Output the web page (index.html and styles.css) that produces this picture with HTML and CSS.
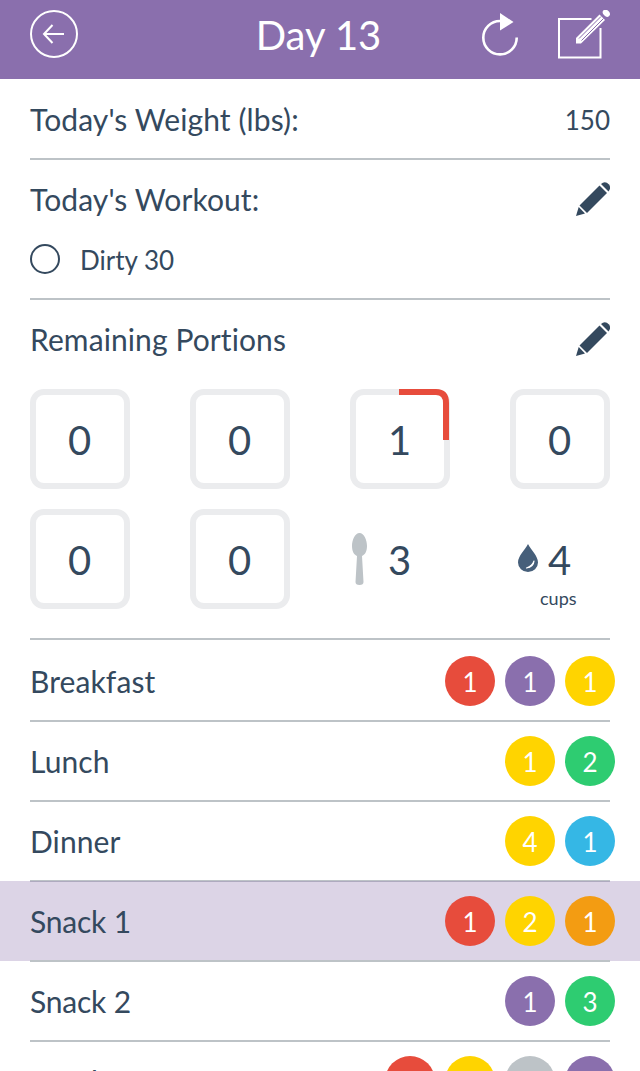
FILE: index.html
```html
<!DOCTYPE html>
<html lang="en">
<head>
<meta charset="utf-8">
<title>Day 13</title>
<link rel="stylesheet" href="styles.css">
</head>
<body>
<div class="app">
  <header class="topbar">
    <svg class="back" width="48" height="48" viewBox="0 0 48 48" fill="none" stroke="#fff" stroke-width="2"><circle cx="24" cy="24" r="23"/><path d="M34 24H14M22.500 15L14 24l8.500 9"/></svg>
    <h1 class="title">Day 13</h1>
    <div class="actions">
      <svg width="38" height="44" viewBox="0 0 38 44"><path d="M20 8A16.700 16.700 0 1 0 36.700 24.500" fill="none" stroke="#fff" stroke-width="2.600"/><path d="M20 0l13.500 9L20 17.500z" fill="#fff"/></svg>
      <svg width="54" height="50" viewBox="0 0 54 50"><path d="M35.500 9H3V47.500H44.500V18" fill="none" stroke="#fff" stroke-width="2"/><path d="M20 28L43.500 4.500 49 10 25 33.500H20z" fill="#fff"/><path d="M23 28.500L45 6.500M25.500 30.500L47.500 8.500" stroke="#8a6fad" stroke-width="1"/><ellipse cx="50.300" cy="3.200" rx="4" ry="3" transform="rotate(45 50.300 3.200)" fill="#fff"/></svg>
    </div>
  </header>

  <section class="section weight">
    <h2 class="label">Today's Weight (lbs):</h2>
    <span class="value">150</span>
  </section>

  <section class="section workout">
    <div class="heading">
      <h2 class="label">Today's Workout:</h2>
      <svg class="pencil" width="34" height="34" viewBox="0 0 34 34" fill="#34495e"><path d="M25 2Q29 -1.500 33 2.500Q35.500 6 32.500 9.500z"/><path d="M23.500 3.500L31 11 11 31 3.500 23.500z"/><path d="M2.700 25L9 31.500 0 34z"/></svg>
    </div>
    <div class="task"><span class="radio"></span><span class="value">Dirty 30</span></div>
  </section>

  <section class="section portions">
    <div class="heading">
      <h2 class="label">Remaining Portions</h2>
      <svg class="pencil" width="34" height="34" viewBox="0 0 34 34" fill="#34495e"><path d="M25 2Q29 -1.500 33 2.500Q35.500 6 32.500 9.500z"/><path d="M23.500 3.500L31 11 11 31 3.500 23.500z"/><path d="M2.700 25L9 31.500 0 34z"/></svg>
    </div>
    <div class="grid">
      <div class="tile">0</div>
      <div class="tile">0</div>
      <div class="tile">1<svg class="progress" width="100" height="100" viewBox="0 0 100 100"><path d="M49 3H86Q96 3 96 14V51" fill="none" stroke="#e74c3c" stroke-width="6"/></svg></div>
      <div class="tile">0</div>
      <div class="tile">0</div>
      <div class="tile">0</div>
      <div class="plain">3
        <svg class="spoon" width="16" height="52" viewBox="0 0 16 52" fill="#bdc3c7"><path d="M7.500 0C12 0 15 7 15 13c0 6-2.500 9-5 10l1.500 26Q11.500 52 7.500 52T3.500 49l1.500-26C2.500 22 0 19 0 13 0 7 3 0 7.500 0z"/></svg>
      </div>
      <div class="plain">4
        <svg class="drop" width="20" height="28" viewBox="0 0 20 28"><path d="M10 0C13 6 20 12 20 18.500A10 9.500 0 0 1 0 18.500C0 12 7 6 10 0z" fill="#465f7a"/><path d="M16 17Q15.500 23 8.500 24Q14.500 22 16 17z" fill="#fff" stroke="#fff" stroke-width="1.200" stroke-linejoin="round"/></svg>
        <span class="unit">cups</span>
      </div>
    </div>
  </section>

  <main class="meals">
    <div class="meal"><h2 class="label">Breakfast</h2><div class="badges"><span class="badge red">1</span><span class="badge purple">1</span><span class="badge yellow">1</span></div></div>
    <div class="meal"><h2 class="label">Lunch</h2><div class="badges"><span class="badge yellow">1</span><span class="badge green">2</span></div></div>
    <div class="meal"><h2 class="label">Dinner</h2><div class="badges"><span class="badge yellow">4</span><span class="badge blue">1</span></div></div>
    <div class="meal selected"><h2 class="label snack">Snack 1</h2><div class="badges"><span class="badge red">1</span><span class="badge yellow">2</span><span class="badge orange">1</span></div></div>
    <div class="meal"><h2 class="label snack">Snack 2</h2><div class="badges"><span class="badge purple">1</span><span class="badge green">3</span></div></div>
    <div class="meal"><h2 class="label snack">Snack 3</h2><div class="badges"><span class="badge red"></span><span class="badge yellow"></span><span class="badge gray"></span><span class="badge purple"></span></div></div>
  </main>
</div>
</body>
</html>
```

FILE: styles.css
```css
* { box-sizing: border-box; }
body { margin: 0; background: #fff; color: #34495e; font-family: Lato, sans-serif; font-variant-ligatures: none; }
svg { display: block; flex: none; }
.app { width: 640px; height: 1071px; overflow: hidden; }
.topbar { height: 79px; padding: 10px 30px 0; background: #8a6fad; color: #fff; display: grid; grid-template-columns: 1fr auto 1fr; align-items: start; }
.title { margin: 0; font-size: 40px; font-weight: 400; line-height: 51px; padding-right: 3px; }
.actions { display: flex; justify-content: flex-end; gap: 38px; }
.actions svg:first-child { margin-top: 3px; }
.label { margin: 0; font-size: 30px; font-weight: 400; line-height: 38px; letter-spacing: 0.1px; }
.snack { letter-spacing: -0.2px; }
.value { font-size: 26px; line-height: 40px; }
.section { margin: 0 30px; border-bottom: 2px solid #bdc3c7; }
.weight { height: 81px; display: flex; justify-content: space-between; padding-top: 21px; }
.workout { height: 140px; padding-top: 20px; }
.heading { display: flex; justify-content: space-between; height: 40px; }
.pencil { margin-top: 2px; }
.task { display: flex; align-items: center; gap: 20px; margin-top: 19px; }
.task .value { padding-top: 2px; line-height: 38px; }
.radio { width: 30px; height: 30px; border: 2px solid #34495e; border-radius: 50%; }
.portions { height: 340px; padding-top: 20px; }
.grid { display: grid; grid-template-columns: repeat(4, 100px); grid-auto-rows: 100px; gap: 20px 60px; margin-top: 29px; }
.tile, .plain { position: relative; font-size: 40px; line-height: 100px; text-align: center; }
.tile { border: 6px solid #ebecee; border-radius: 14px; line-height: 90px; padding-right: 1px; }
.plain { line-height: 102px; padding-right: 1px; }
.progress { position: absolute; left: -6px; top: -6px; }
.spoon { position: absolute; left: 2px; top: 24px; }
.drop { position: absolute; left: 8px; top: 35px; }
.unit { position: absolute; left: 30px; top: 78px; font-size: 18px; line-height: 22px; }
.meals { padding-top: 1px; }
.meal { position: relative; height: 80px; padding: 0 25px 0 30px; display: flex; align-items: center; justify-content: space-between; }
.meal::after { content: ""; position: absolute; left: 30px; right: 30px; bottom: -1px; height: 2px; background: #bdc3c7; }
.selected { background: rgba(138, 111, 173, 0.3); }
.badges { display: flex; gap: 10px; }
.badge { width: 50px; height: 50px; border-radius: 50%; color: #fff; font-size: 26px; line-height: 52px; text-align: center; }
.red { background: #e74c3c; }
.purple { background: #8a6fad; }
.yellow { background: #ffd400; }
.green { background: #2ecc71; }
.blue { background: #35b7e5; }
.orange { background: #f39c12; }
.gray { background: #bdc3c7; }
```
